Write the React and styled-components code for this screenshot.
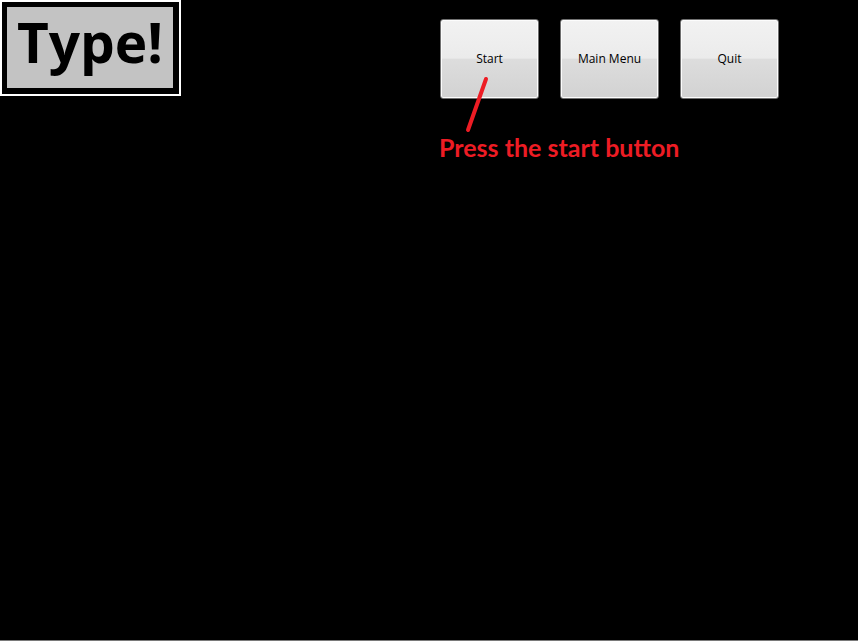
import React from 'react';
import styled, { createGlobalStyle } from 'styled-components';

const GlobalStyle = createGlobalStyle`
  html, body {
    margin: 0;
    padding: 0;
    background: #000;
  }
  #root {
    height: 641px;
  }
`;

const Screen = styled.div`
  height: 641px;
  box-sizing: border-box;
  border-bottom: 1px solid #7a7a7a;
  display: flex;
  align-items: flex-start;
  background: #000;
`;

const TitleBox = styled.div`
  width: 181px;
  height: 96px;
  flex-shrink: 0;
  box-sizing: border-box;
  border: 2px solid #fff;
  padding: 5px 6px 6px 5px;
  background: #000;
`;

const TitleFace = styled.div`
  height: 100%;
  background: #c3c3c3;
  display: flex;
  align-items: center;
  justify-content: center;
  font-family: "Open Sans", "DejaVu Sans", sans-serif;
  font-weight: 700;
  font-size: 55px;
  line-height: 1;
  color: #000;
  padding-bottom: 12px;
  box-sizing: border-box;
`;

const Controls = styled.div`
  position: relative;
  margin-left: 259px;
  margin-top: 19px;
  display: flex;
  flex-direction: column;
`;

const ButtonRow = styled.div`
  display: flex;
  gap: 21px;
`;

const WinButton = styled.button`
  width: 99px;
  height: 80px;
  box-sizing: border-box;
  border: 1px solid #707070;
  border-radius: 3px;
  box-shadow: inset 0 0 0 1px #fcfcfc;
  background: linear-gradient(
    to bottom,
    #f2f2f2 0%,
    #ebebeb 49%,
    #dddddd 50%,
    #d2d2d2 100%
  );
  font-family: "Open Sans", "Noto Sans", sans-serif;
  font-size: 12px;
  color: #000;
  padding: 0;
  padding-bottom: 2px;
  margin: 0;
  cursor: pointer;
`;

const Hint = styled.div`
  margin-top: 36px;
  margin-left: -1px;
  font-family: "Lato", "Open Sans", sans-serif;
  font-weight: 700;
  font-size: 25px;
  line-height: 1;
  color: #ed1c24;
`;

const Pointer = styled.svg`
  position: absolute;
  left: 20px;
  top: 56px;
  overflow: visible;
`;

export default function App() {
  return (
    <>
      <GlobalStyle />
      <Screen>
        <TitleBox>
          <TitleFace>Type!</TitleFace>
        </TitleBox>
        <Controls>
          <ButtonRow>
            <WinButton>Start</WinButton>
            <WinButton>Main Menu</WinButton>
            <WinButton>Quit</WinButton>
          </ButtonRow>
          <Hint>Press the start button</Hint>
          <Pointer width="30" height="60">
            <line x1="26" y1="4" x2="8" y2="55" stroke="#ed1c24" strokeWidth="4" strokeLinecap="round" />
          </Pointer>
        </Controls>
      </Screen>
    </>
  );
}
